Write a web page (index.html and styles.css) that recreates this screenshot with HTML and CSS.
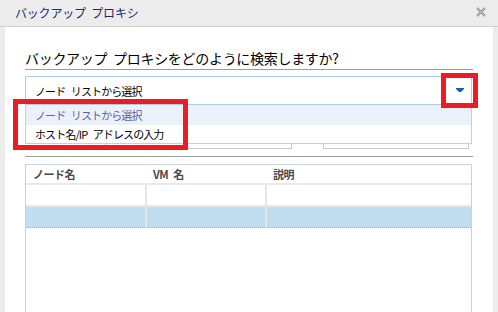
FILE: index.html
```html
<!DOCTYPE html>
<html lang="ja">
<head>
    <meta charset="UTF-8">
    <title>バックアップ プロキシ</title>
    <link rel="stylesheet" href="styles.css">
</head>
<body>
    <div class="dialog">
        <div class="titlebar">
            <span class="title">バックアップ プロキシ</span>
            <svg class="close" width="10" height="10" viewBox="0 0 10 10">
                <path d="M1 1 L9 9 M9 1 L1 9" stroke="#8c8c8c" stroke-width="2.2" fill="none"/>
                <path d="M1 1 L9 9 M9 1 L1 9" stroke="#d6d6d6" stroke-width="0.7" fill="none"/>
            </svg>
        </div>

        <div class="panel">
            <h2 class="question">バックアップ プロキシをどのように検索しますか?</h2>

            <div class="combo">
                <span class="combo-text">ノード リストから選択</span>
                <svg class="combo-arrow" width="8" height="5" viewBox="0 0 8 5">
                    <path d="M0 0 H8 V1 L5 4 H3 L0 1 Z" fill="#1b5fa8"/>
                </svg>
                <ul class="combo-list">
                    <li class="selected">ノード リストから選択</li>
                    <li>ホスト名/IP アドレスの入力</li>
                </ul>
                <div class="mark mark-arrow"></div>
                <div class="mark mark-list"></div>
            </div>

            <div class="fields">
                <div class="field-label"></div>
                <div class="field host"></div>
                <div class="field port"></div>
            </div>

            <div class="separator"></div>

            <div class="grid">
                <table>
                    <thead>
                        <tr>
                            <th class="col-node">ノード名</th>
                            <th class="col-vm">VM 名</th>
                            <th>説明</th>
                        </tr>
                    </thead>
                    <tbody>
                        <tr>
                            <td></td>
                            <td></td>
                            <td></td>
                        </tr>
                        <tr class="row-selected">
                            <td></td>
                            <td></td>
                            <td></td>
                        </tr>
                    </tbody>
                </table>
            </div>
        </div>
    </div>
</body>
</html>
```

FILE: styles.css
```css
body {
    margin: 0;
    background-color: #ececec;
    font-family: "Noto Sans CJK JP", "Liberation Sans", sans-serif;
    color: #000;
}
.dialog {
    width: 498px;
    height: 312px;
    display: flex;
    flex-direction: column;
    overflow: hidden;
}
.titlebar {
    height: 26px;
    flex-shrink: 0;
    border-bottom: 1px solid #d0d0d0;
    display: flex;
    align-items: center;
    justify-content: space-between;
    padding: 0 12px 0 15px;
}
.title {
    font-size: 12px;
    color: #1c2a78;
    letter-spacing: -0.2px;
    word-spacing: 3px;
    line-height: 14px;
}
.close {
    margin-top: -2px;
}
.panel {
    flex: 1;
    margin: 0 5px;
    background-color: #fff;
    padding: 0 20px;
}
.question {
    margin: 0;
    padding: 22px 0 2px 0;
    font-size: 14px;
    font-weight: normal;
    line-height: 18px;
    border-bottom: 1px solid #9c9c9c;
    letter-spacing: -0.3px;
    word-spacing: 3px;
}
.combo {
    position: relative;
    margin: 6px 1px 0 0;
    height: 27px;
    border: 1px solid #aecbe9;
    display: flex;
    align-items: center;
    justify-content: space-between;
    padding: 0 7px 0 9px;
}
.combo-text {
    font-size: 11px;
    letter-spacing: -0.9px;
    word-spacing: 4px;
}
.combo-list {
    position: absolute;
    top: 28px;
    left: -1px;
    right: -1px;
    margin: 0;
    padding: 0;
    list-style: none;
    background-color: #fff;
    border: 1px solid #c8cfd9;
    border-top: none;
    z-index: 2;
}
.combo-list li {
    font-size: 11px;
    letter-spacing: -0.9px;
    word-spacing: 4px;
    height: 18px;
    line-height: 18px;
    padding-left: 9px;
}
.combo-list li.selected {
    height: 20px;
    line-height: 20px;
    background-color: #eaf1fa;
    color: #5d5fa8;
}
.mark {
    position: absolute;
    border: 5px solid #ea1c24;
    z-index: 3;
}
.mark-arrow {
    top: -4px;
    left: 415px;
    width: 27px;
    height: 25px;
}
.mark-list {
    top: 22px;
    left: -13px;
    width: 165px;
    height: 41px;
}
.fields {
    display: flex;
    margin-top: 7px;
    height: 37px;
}
.field-label {
    width: 80px;
}
.field {
    border: 1px solid #c8c8c8;
}
.host {
    width: 185px;
}
.port {
    margin-left: 31px;
    width: 144px;
}
.separator {
    margin-top: 7px;
    border-top: 1px solid #a0a0a0;
}
.grid {
    margin-top: 7px;
    margin-right: 1px;
    height: 160px;
    border: 1px solid #c9d1dc;
    border-bottom: none;
}
table {
    width: 100%;
    border-collapse: collapse;
    table-layout: fixed;
}
th {
    height: 18px;
    text-align: left;
    font-size: 11px;
    font-weight: bold;
    color: #4a4a4a;
    padding: 0 0 0 7px;
    letter-spacing: -0.5px;
    word-spacing: 3px;
    border-bottom: 2px solid #e8e8e8;
}
.col-node {
    width: 113px;
}
.col-vm {
    width: 113px;
}
td {
    height: 20px;
    padding: 0;
    border-right: 2px solid #e6e6e6;
    border-bottom: 2px solid #e8e8e8;
}
td:last-child {
    border-right: none;
}
.row-selected td {
    background-color: #bfdeef;
    height: 20px;
    border-bottom: 1px dotted #9fbccf;
}
```
